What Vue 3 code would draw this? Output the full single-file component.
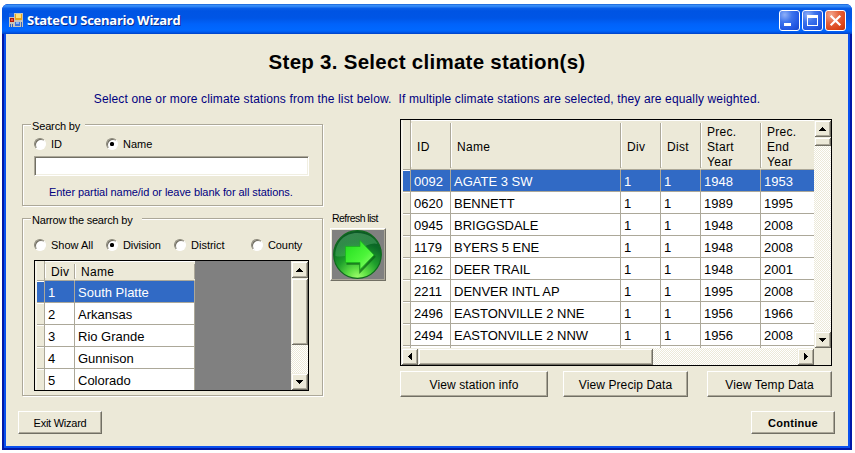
<script setup>
import { ref } from 'vue'

const keyword = ref('')

const narrowOptions = [
  { label: 'Show All', cls: 'n-all', on: false },
  { label: 'Division', cls: 'n-div', on: true },
  { label: 'District', cls: 'n-dist', on: false },
  { label: 'County', cls: 'n-county', on: false },
]

const divisions = [
  [1, 'South Platte'],
  [2, 'Arkansas'],
  [3, 'Rio Grande'],
  [4, 'Gunnison'],
  [5, 'Colorado'],
]

const stationHeads = [['ID'], ['Name'], ['Div'], ['Dist'], ['Prec.', 'Start', 'Year'], ['Prec.', 'End', 'Year']]

const stations = [
  ['0092', 'AGATE 3 SW', 1, 1, 1948, 1953],
  ['0620', 'BENNETT', 1, 1, 1989, 1995],
  ['0945', 'BRIGGSDALE', 1, 1, 1948, 2008],
  ['1179', 'BYERS 5 ENE', 1, 1, 1948, 2008],
  ['2162', 'DEER TRAIL', 1, 1, 1948, 2001],
  ['2211', 'DENVER INTL AP', 1, 1, 1995, 2008],
  ['2496', 'EASTONVILLE 2 NNE', 1, 1, 1956, 1966],
  ['2494', 'EASTONVILLE 2 NNW', 1, 1, 1956, 2008],
  ['', '', '', '', '', ''],
]
</script>

<template>
  <div class="window">
    <header class="titlebar">
      <svg class="app-icon" width="14" height="14" viewBox="0 0 14 14" shape-rendering="crispEdges">
        <rect width="14" height="14" fill="#c9c5b8" />
        <rect x="1" y="5" width="4" height="4" fill="#b3160b" />
        <rect x="2" y="6" width="2" height="2" fill="#e8553c" />
        <rect x="6" y="1" width="7" height="6" fill="#e8a51c" />
        <rect x="7" y="1" width="5" height="4" fill="#ffe07a" />
        <rect x="6" y="9" width="5" height="4" fill="#3a74dc" />
        <rect x="7" y="9" width="3" height="2" fill="#8cb6f6" />
        <rect x="0" y="0" width="5" height="4" fill="#1a62e6" />
        <rect x="1" y="11" width="1" height="3" fill="#2f62c0" />
        <rect x="3" y="11" width="1" height="3" fill="#2f62c0" />
        <rect x="12" y="9" width="1" height="5" fill="#2f62c0" />
      </svg>
      <span class="caption">StateCU Scenario Wizard</span>
      <div class="controls">
        <button class="ctl">
          <svg width="19" height="19" viewBox="0 0 19 19"><rect x="4" y="12" width="7" height="3" fill="#fff" /></svg>
        </button>
        <button class="ctl">
          <svg width="19" height="19" viewBox="0 0 19 19">
            <path d="M4 4h11v11H4z M5 7v7h9V7z" fill="#fff" fill-rule="evenodd" />
          </svg>
        </button>
        <button class="ctl close">
          <svg width="19" height="19" viewBox="0 0 19 19">
            <path d="M4.7 4.7L14.3 14.3M14.3 4.7L4.7 14.3" stroke="#fff" stroke-width="2.2" />
          </svg>
        </button>
      </div>
    </header>

    <main class="client">
      <h1>Step 3. Select climate station(s)</h1>
      <p class="intro">Select one or more climate stations from the list below.&nbsp; If multiple climate stations are selected, they are equally weighted.</p>

      <div class="columns">
        <section class="left">
          <div class="group search">
            <span class="legend">Search by</span>
            <div class="radios">
              <label class="radio n-all"><b></b><span>ID</span></label>
              <label class="radio"><b class="on"></b><span>Name</span></label>
            </div>
            <input v-model="keyword" class="field" type="text" />
            <div class="hint">Enter partial name/id or leave blank for all stations.</div>
          </div>

          <div class="group narrow">
            <span class="legend wide">Narrow the search by</span>
            <div class="radios">
              <label v-for="o in narrowOptions" :key="o.label" class="radio" :class="o.cls">
                <b :class="{ on: o.on }"></b><span>{{ o.label }}</span>
              </label>
            </div>
            <div class="grid divisions">
              <div class="table">
                <div class="row head"><span class="rh"></span><span class="cell">Div</span><span class="cell">Name</span></div>
                <div v-for="(d, i) in divisions" :key="i" class="row" :class="{ sel: i === 0 }">
                  <span class="rh"></span><span v-for="(c, j) in d" :key="j" class="cell">{{ c }}</span>
                </div>
              </div>
              <div class="vbar">
                <span class="sb"><svg width="7" height="4" viewBox="0 0 7 4"><path d="M3 0h1v1h1v1h1v1h1v1H0V3h1V2h1V1h1z" /></svg></span>
                <span class="thumb"></span>
                <span class="sb end"><svg width="7" height="4" viewBox="0 0 7 4"><path d="M3 4h1V3h1V2h1V1h1V0H0v1h1v1h1v1h1z" /></svg></span>
              </div>
            </div>
          </div>
        </section>

        <section class="middle">
          <div class="refresh-label">Refresh list</div>
          <button class="refresh">
            <svg width="52" height="49" viewBox="0 0 52 49">
              <defs>
                <radialGradient id="orb" cx="0.5" cy="1" r="0.95">
                  <stop offset="0" stop-color="#a4ff70" />
                  <stop offset="0.22" stop-color="#5fe044" />
                  <stop offset="0.5" stop-color="#1f9f2c" />
                  <stop offset="0.8" stop-color="#0b6a26" />
                  <stop offset="1" stop-color="#0c5a26" />
                </radialGradient>
                <linearGradient id="gloss" x1="0" y1="0" x2="0.4" y2="1">
                  <stop offset="0" stop-color="#7cc890" stop-opacity="0.4" />
                  <stop offset="1" stop-color="#5cc070" stop-opacity="0.35" />
                </linearGradient>
                <linearGradient id="arrow" x1="0" y1="0" x2="1" y2="1">
                  <stop offset="0" stop-color="#1fdc1c" />
                  <stop offset="0.6" stop-color="#4df53a" />
                  <stop offset="1" stop-color="#a4ff7a" />
                </linearGradient>
              </defs>
              <circle cx="25.500" cy="24.500" r="23.800" fill="url(#orb)" stroke="#0e6a1c" stroke-width="1.200" />
              <path d="M3.500 26C3 12 13 3 25 3c11 0 18 5 20.500 11C34 10 20 30 3.500 26z" fill="url(#gloss)" />
              <path d="M14.500 33.500H28.500v7.500l14.500-15" fill="none" stroke="#0a6414" stroke-width="2.500" opacity="0.7" />
              <path d="M13.500 16.500H28V10.500l14 14.500L28 39.500v-7H13.500z" fill="url(#arrow)" stroke="#19b01b" stroke-width="0.700" />
            </svg>
          </button>
        </section>

        <section class="right">
          <div class="grid stations">
            <div class="upper">
              <div class="table">
                <div class="row head">
                  <span class="rh"></span>
                  <span v-for="(h, i) in stationHeads" :key="i" class="cell"><em v-for="t in h" :key="t">{{ t }}</em></span>
                </div>
                <div v-for="(s, i) in stations" :key="i" class="row" :class="{ sel: i === 0 }">
                  <span class="rh"></span><span v-for="(c, j) in s" :key="j" class="cell">{{ c }}</span>
                </div>
              </div>
              <div class="vbar">
                <span class="sb"><svg width="7" height="4" viewBox="0 0 7 4"><path d="M3 0h1v1h1v1h1v1h1v1H0V3h1V2h1V1h1z" /></svg></span>
                <span class="thumb"></span>
                <span class="sb end"><svg width="7" height="4" viewBox="0 0 7 4"><path d="M3 4h1V3h1V2h1V1h1V0H0v1h1v1h1v1h1z" /></svg></span>
              </div>
            </div>
            <div class="hbar">
              <span class="sb"><svg width="4" height="7" viewBox="0 0 4 7"><path d="M0 3v1h1v1h1v1h1v1h1V0H3v1H2v1H1v1z" /></svg></span>
              <span class="thumb"></span>
              <span class="sb end"><svg width="4" height="7" viewBox="0 0 4 7"><path d="M4 3v1H3v1H2v1H1v1H0V0h1v1h1v1h1v1z" /></svg></span>
              <span class="corner"></span>
            </div>
          </div>
          <div class="actions">
            <button class="btn a1">View station info</button>
            <button class="btn a2">View Precip Data</button>
            <button class="btn a3">View Temp Data</button>
          </div>
        </section>
      </div>

      <footer class="footer">
        <button class="btn exit">Exit Wizard</button>
        <button class="btn next">Continue</button>
      </footer>
    </main>
  </div>
</template>

<style>
body {
  background: #fff;
  overflow: hidden;
}
</style>

<style scoped>
* {
  box-sizing: border-box;
}
.window {
  width: 850px;
  height: 446px;
  margin: 4px 0 0 2px;
  display: flex;
  flex-direction: column;
  border-radius: 6px 6px 0 0;
  overflow: hidden;
  background: #0831d9;
  font-family: 'Liberation Sans', Arial, sans-serif;
  font-size: 11px;
  color: #000;
}
button {
  font: inherit;
  padding: 0;
  margin: 0;
  border: 0;
  color: inherit;
}
.titlebar {
  flex: none;
  height: 30px;
  display: flex;
  align-items: center;
  padding: 2px 6px 0 7px;
  background: linear-gradient(#0a50c8 0, #3c92f8 1px, #2a80f4 3px, #0a5fe8 4px, #0054e3 7px, #0055e5 14px, #0062fa 20px, #0068ff 26px, #005cf0 28px, #0040c4 30px);
  position: relative;
  z-index: 1;
}
.app-icon {
  flex: none;
}
.caption {
  margin-left: 4px;
  white-space: nowrap;
  color: #fff;
  font: bold 13px/16px 'Open Sans', 'Noto Sans', sans-serif;
  letter-spacing: -0.27px;
  text-shadow: 1px 1px 0 #0a2c8c;
}
.controls {
  margin-left: auto;
  display: flex;
  gap: 2px;
}
.ctl {
  width: 21px;
  height: 21px;
  border: 1px solid #fff;
  border-radius: 3px;
  display: flex;
  background: radial-gradient(circle at 25% 20%, #8fb0f8 0, #3e74ec 35%, #2258e4 70%, #1746c8 100%);
}
.ctl.close {
  background: radial-gradient(circle at 25% 20%, #f4a78e 0, #e4623c 40%, #da4418 75%, #b93008 100%);
}
.client {
  flex: none;
  width: 842px;
  height: 412px;
  margin: 0 4px;
  background: #ece9d8;
  display: flex;
  flex-direction: column;
  box-shadow: 0 0 0 2px #0a50ee, 0 0 0 4px #0019a8;
}
h1 {
  margin: 14px 0 0;
  height: 28px;
  font-size: 20.5px;
  line-height: 28px;
  text-align: center;
  letter-spacing: 0.28px;
}
.intro {
  margin: 14px 0 0;
  height: 18px;
  line-height: 18px;
  font-size: 12px;
  letter-spacing: 0.137px;
  color: #000080;
  text-align: center;
  white-space: nowrap;
}
.columns {
  margin-top: 11px;
  padding-left: 16px;
  display: flex;
  align-items: flex-start;
}
.left {
  width: 301px;
  padding-top: 5px;
}
.group {
  border: 1px solid #aca899;
  box-shadow: 1px 1px 0 #fff, inset 1px 1px 0 #fff;
  height: 82px;
  padding-left: 11px;
  display: flex;
  flex-direction: column;
}
.group.narrow {
  margin-top: 12px;
  height: 178px;
}
.legend {
  margin: -6px 0 0 -3px;
  width: 54px;
  height: 14px;
  line-height: 14px;
  padding-left: 1px;
  background: #ece9d8;
  white-space: nowrap;
  letter-spacing: -0.15px;
}
.legend.wide {
  width: 111px;
  letter-spacing: -0.2px;
}
.radios {
  display: flex;
  height: 14px;
  margin-top: 4px;
}
.narrow .radios {
  margin-top: 11px;
}
.radio {
  flex: none;
  display: flex;
  align-items: center;
  white-space: nowrap;
  width: 77px;
}
.n-all {
  width: 72px;
}
.n-div {
  width: 68px;
}
.n-div,
.n-county {
  letter-spacing: -0.1px;
}
.n-county {
  width: 55px;
}
.radio b {
  flex: none;
  width: 12px;
  height: 12px;
  margin-right: 5px;
  border-radius: 50%;
  background: #fff;
  border: 1px solid;
  border-color: #8a8778 #fff #fff #8a8778;
  box-shadow: inset 1px 1px 0 #6f6c60;
  display: flex;
  align-items: center;
  justify-content: center;
}
.radio b.on::after {
  content: '';
  width: 4px;
  height: 4px;
  border-radius: 1.500px;
  background: #000;
}
.field {
  width: 275px;
  height: 20px;
  margin-top: 5px;
  padding: 0 3px;
  border: 1px solid;
  border-color: #aca899 #fff #fff #aca899;
  box-shadow: inset 1px 1px 0 #716f64, inset -1px -1px 0 #f1efe2;
  background: #fff;
  outline: none;
}
.hint {
  margin: 9px 0 0 15px;
  height: 14px;
  line-height: 14px;
  color: #000080;
  white-space: nowrap;
  letter-spacing: -0.06px;
}

/* data grids */
.grid {
  border: 1px solid #000;
  background: #808080;
  display: flex;
}
.table {
  overflow: hidden;
}
.row {
  display: grid;
  height: 22px;
  background: #fff;
  font-size: 13px;
}
.cell {
  border-right: 1px solid #aca899;
  border-bottom: 1px solid #aca899;
  padding-left: 3px;
  line-height: 23px;
  white-space: nowrap;
  overflow: hidden;
}
.rh {
  background: #ece9d8;
  border-right: 1px solid #aca899;
  border-left: 2px solid #f6f4ea;
  box-shadow: inset 0 1px 0 #fff, inset 0 -1px 0 #aca899;
}
.row.head {
  background: #ece9d8;
  font-size: 12px;
  letter-spacing: 0.3px;
  box-shadow: inset 0 1px 0 #fff;
}
.head .cell {
  padding: 4px 0 0 6px;
  border-right-color: transparent;
  border-bottom-color: #aca899;
  background: linear-gradient(#aca899, #aca899) no-repeat 100% 3px / 1px calc(100% - 5px) border-box,
    linear-gradient(#fff, #fff) no-repeat 0 3px / 1px calc(100% - 5px);
  display: flex;
  flex-direction: column;
  justify-content: center;
}
.head em {
  font-style: normal;
  line-height: 15px;
}
.head .rh {
  box-shadow: inset 0 -1px 0 #aca899;
}
.sel,
.sel .rh {
  background: #316ac5;
  color: #fff;
}
.divisions {
  width: 275px;
  height: 131px;
  margin-top: 8px;
}
.divisions .table {
  width: 160px;
  margin-right: 96px;
  flex: none;
}
.divisions .row {
  grid-template-columns: 10px 30px 120px;
}
.divisions .row.head {
  height: 20px;
}
.divisions .head .cell {
  line-height: 15px;
}

/* scroll bars */
.vbar {
  width: 17px;
  flex: none;
  display: flex;
  flex-direction: column;
}
.vbar,
.hbar {
  background: repeating-conic-gradient(#fff 0 25%, #ece9d8 0 50%) 0 0 / 2px 2px;
}
.sb,
.thumb {
  flex: none;
  width: 17px;
  height: 17px;
  background: #ece9d8;
  box-shadow: inset 1px 1px 0 #f1efe2, inset -1px -1px 0 #716f64, inset 2px 2px 0 #fff, inset -2px -2px 0 #aca899;
  display: flex;
  align-items: center;
  justify-content: center;
}
.divisions .thumb {
  height: 67px;
}
.stations .vbar .thumb {
  height: 9px;
}
.vbar .end {
  margin-top: auto;
}
.hbar {
  height: 17px;
  display: flex;
}
.hbar .thumb {
  width: 235px;
}
.hbar .end {
  margin-left: auto;
}
.corner {
  width: 17px;
  background: #ece9d8;
}

.middle {
  width: 56px;
  margin: 93px 0 0 7px;
}
.refresh-label {
  height: 12px;
  line-height: 12px;
  margin-left: 2px;
  font-size: 10.5px;
  letter-spacing: -0.55px;
  white-space: nowrap;
}
.refresh {
  display: flex;
  align-items: center;
  justify-content: center;
  margin-top: 4px;
  width: 56px;
  height: 53px;
  background: #808080;
  border: 1px solid;
  border-color: #fff #716f64 #716f64 #fff;
  box-shadow: inset -1px -1px 0 #aca899, inset 1px 1px 0 #ece9d8;
}

.right {
  margin-left: 14px;
  width: 432px;
}
.stations {
  height: 247px;
  flex-direction: column;
}
.upper {
  display: flex;
  height: 228px;
}
.stations .table {
  width: 413px;
}
.stations .row {
  grid-template-columns: 10px 40px 170px 40px 40px 60px 54px;
}
.stations .row.head {
  height: 50px;
}
.stations .cell:last-child {
  border-right: 0;
}
.stations .head .cell:last-child {
  background: linear-gradient(#fff, #fff) no-repeat 0 3px / 1px calc(100% - 5px);
}
.stations .head .cell {
  padding: 6px 0 0 6px;
}
.actions {
  display: flex;
  margin-top: 5px;
  font-size: 12px;
}
.btn {
  background: #ece9d8;
  border: 1px solid;
  border-color: #fff #716f64 #716f64 #fff;
  box-shadow: inset -1px -1px 0 #aca899;
  white-space: nowrap;
}
.actions .btn {
  height: 26px;
  padding-top: 1px;
  letter-spacing: 0.1px;
}
.a1 {
  width: 148px;
}
.a2 {
  width: 125px;
  margin-left: 15px;
}
.a3 {
  width: 125px;
  margin-left: 19px;
}
.footer {
  margin-top: 14px;
  display: flex;
  justify-content: space-between;
  padding: 0 13px 0 12px;
}
.exit {
  width: 84px;
  height: 23px;
  letter-spacing: -0.25px;
}
.next {
  width: 84px;
  height: 23px;
  font-weight: bold;
  letter-spacing: 0.3px;
}
</style>
